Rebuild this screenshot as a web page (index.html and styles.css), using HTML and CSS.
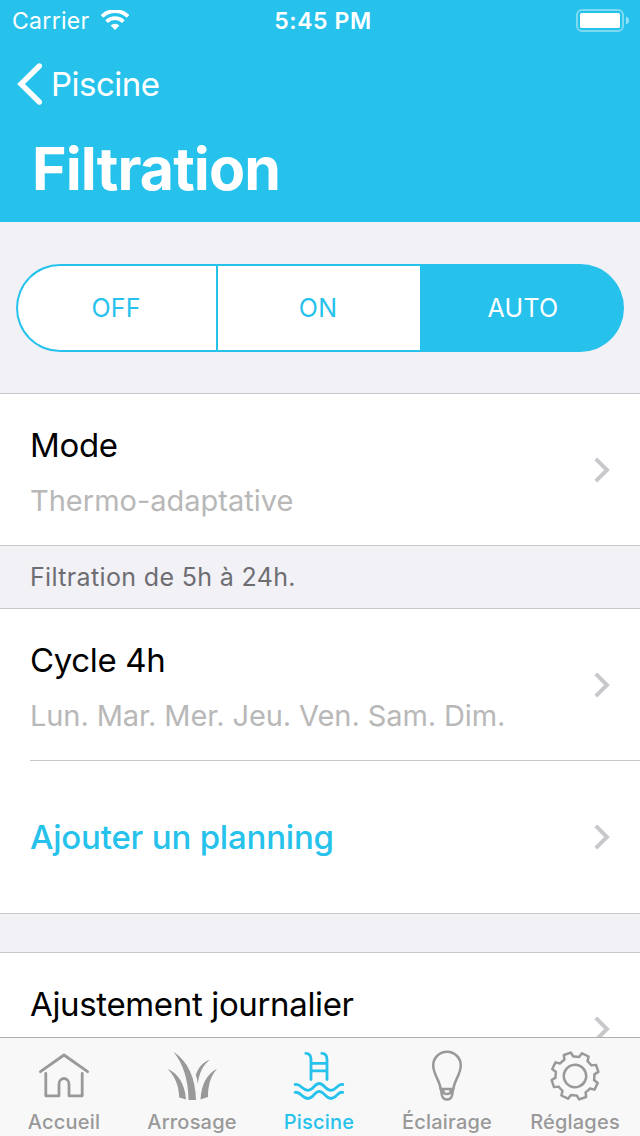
FILE: index.html
```html
<!DOCTYPE html>
<html lang="fr">
<head>
  <meta charset="UTF-8" />
  <meta name="viewport" content="width=device-width, initial-scale=1.0"/>
  <title>Filtration</title>
  <link rel="stylesheet" href="styles.css">
</head>
<body>
  <header>
    <div class="status-bar">
      <div class="carrier">
        <span>Carrier</span>
        <svg width="28" height="20" viewBox="0 0 28 20" fill="none" stroke="#fff">
          <path d="M1 6.4A18.3 18.3 0 0 1 27 6.4" stroke-width="3.8"/>
          <path d="M5.6 11.6A11.8 11.8 0 0 1 22.4 11.6" stroke-width="3.8"/>
          <path d="M14 20L9.6 15.6A6 6 0 0 1 18.4 15.6Z" fill="#fff" stroke="none"/>
        </svg>
      </div>
      <div class="time">5:45 PM</div>
      <svg class="battery" width="53" height="23" viewBox="0 0 53 23">
        <rect x="1" y="1" width="46" height="21" rx="5" fill="none" stroke="#fff" stroke-opacity=".4" stroke-width="2"/>
        <rect x="4" y="4" width="40" height="15" rx="1.5" fill="#fff"/>
        <path d="M50 7.5Q53 8.6 53 11.5T50 15.5Z" fill="#fff" fill-opacity=".5"/>
      </svg>
    </div>
    <a class="back" href="#">
      <svg width="26" height="42" viewBox="0 0 26 42" fill="none" stroke="#fff" stroke-width="5.4" stroke-linecap="round" stroke-linejoin="miter">
        <path d="M22.3 3L4 21L22.3 39"/>
      </svg>
      <span>Piscine</span>
    </a>
    <h1>Filtration</h1>
  </header>

  <main>
    <div class="segmented">
      <button>OFF</button>
      <button>ON</button>
      <button class="active">AUTO</button>
    </div>

    <div class="group">
      <div class="row">
        <div class="text">
          <div class="label">Mode</div>
          <div class="detail">Thermo-adaptative</div>
        </div>
        <svg class="chevron" viewBox="0 0 16 26"><path d="M1.8 1.8L13 13L1.8 24.2"/></svg>
      </div>
    </div>

    <div class="group-footer">Filtration de 5h à 24h.</div>

    <div class="group">
      <div class="row">
        <div class="text">
          <div class="label">Cycle 4h</div>
          <div class="detail days">Lun. Mar. Mer. Jeu. Ven. Sam. Dim.</div>
        </div>
        <svg class="chevron" viewBox="0 0 16 26"><path d="M1.8 1.8L13 13L1.8 24.2"/></svg>
      </div>
      <div class="row line">
        <div class="label add">Ajouter un planning</div>
        <svg class="chevron" viewBox="0 0 16 26"><path d="M1.8 1.8L13 13L1.8 24.2"/></svg>
      </div>
    </div>

    <div class="group last">
      <div class="row">
        <div class="text">
          <div class="label">Ajustement journalier</div>
          <div class="detail">&nbsp;</div>
        </div>
        <svg class="chevron" viewBox="0 0 16 26"><path d="M1.8 1.8L13 13L1.8 24.2"/></svg>
      </div>
    </div>
  </main>

  <nav>
    <a href="#">
      <svg viewBox="0 0 52 52">
        <path d="M2.4 21.7L26 5L49.6 21.7"/>
        <path d="M7.8 23.5V45.8H21V34A5 5.5 0 0 1 31 34V45.8H44.2V23.5"/>
      </svg>
      <span>Accueil</span>
    </a>
    <a href="#">
      <svg class="solid" viewBox="0 0 52 52">
        <path d="M7.3 1.7C22 11 29.5 28 30 50H22.5C22.5 30 17 13 7.3 1.7Z"/>
        <path d="M1.7 18.7C12.5 24 19 34 20 49.5L13.2 47.5C13 35.5 9 27 1.7 18.7Z"/>
        <path d="M43.7 9.7C37 15.5 33.5 22 31.7 34Q31 27.5 29.7 25.3C32 18 36.5 12 43.7 9.7Z"/>
        <path d="M51 18.7C44.5 26.5 42 35 42 47L34.5 49.5C35.5 34 40.5 24.5 51 18.7Z"/>
      </svg>
      <span>Arrosage</span>
    </a>
    <a class="active" href="#">
      <svg viewBox="0 0 52 52">
        <path d="M12.8 3.3C16.8 3.3 18 5.5 18 9.5V29.5M28.8 3.3C32.8 3.3 34 5.5 34 9.5V29.5M18 13.3H34M18 20.8H34"/>
        <path d="M2.2 34.5C8 33.5 9 40.3 15 40.3S21 33.5 26.2 33.5S32 40.3 38 40.3S44 33.5 49.8 34.5"/>
        <path d="M2.2 42.3C8 41.3 9 48.5 15 48.5S21 41.3 26.2 41.3S32 48.5 38 48.5S44 41.3 49.8 42.3"/>
      </svg>
      <span>Piscine</span>
    </a>
    <a href="#">
      <svg viewBox="0 0 52 52" class="thin">
        <path d="M19.6 39C19 31 12.2 24 12.2 15.5A13.8 13.8 0 0 1 39.8 15.5C39.8 24 33 31 32.4 39Z"/>
        <path d="M19.8 39L21 45.5Q22 49.5 26 49.5Q30 49.5 31 45.5L32.2 39M22.5 41V43Q26 45 29.5 43V41"/>
      </svg>
      <span>Éclairage</span>
    </a>
    <a href="#">
      <svg viewBox="0 0 52 52" class="thin">
        <g transform="translate(26 26) rotate(26)">
          <circle r="11.2"/>
          <path d="M-3.7 -23.5H3.7L4.7 -18.9Q8 -17.8 10 -16.7L14 -19.2L19.2 -14L16.7 -10Q18.2 -7.5 18.9 -4.7L23.5 -3.7V3.7L18.9 4.7Q18.2 7.5 16.7 10L19.2 14L14 19.2L10 16.7Q8 17.8 4.7 18.9L3.7 23.5H-3.7L-4.7 18.9Q-8 17.8 -10 16.7L-14 19.2L-19.2 14L-16.7 10Q-18.2 7.5 -18.9 4.7L-23.5 3.7V-3.7L-18.9 -4.7Q-18.2 -7.5 -16.7 -10L-19.2 -14L-14 -19.2L-10 -16.7Q-8 -17.8 -4.7 -18.9Z"/>
        </g>
      </svg>
      <span>Réglages</span>
    </a>
  </nav>
</body>
</html>
```
FILE: styles.css
```css
* {
  box-sizing: border-box;
}
body {
  margin: 0;
  width: 640px;
  height: 1136px;
  overflow: hidden;
  display: flex;
  flex-direction: column;
  background: #f2f1f6;
  color: #000;
  font-family: Inter, "Liberation Sans", sans-serif;
}
a {
  color: inherit;
  text-decoration: none;
}
svg {
  display: block;
  flex: none;
}

/* header */
header {
  height: 222px;
  flex: none;
  background: #26c2ec;
  color: #fff;
}
.status-bar {
  height: 41px;
  padding: 0 11px 0 12px;
  display: grid;
  grid-template-columns: 1fr auto 1fr;
  align-items: center;
  font-size: 23px;
}
.carrier {
  display: flex;
  align-items: center;
  gap: 11px;
  letter-spacing: 0.3px;
}
.carrier svg {
  margin-top: -1px;
}
.time {
  padding-left: 5px;
  font-weight: 600;
  letter-spacing: 0.6px;
}
.battery {
  justify-self: end;
}
.back {
  height: 85px;
  padding-left: 17px;
  display: flex;
  align-items: center;
  gap: 8px;
  font-size: 33px;
  letter-spacing: -0.5px;
}
h1 {
  margin: 7px 0 0 32px;
  font-size: 59px;
  line-height: 72px;
  font-weight: 700;
  letter-spacing: -0.9px;
}

/* content */
main {
  flex: 1;
  min-height: 0;
  overflow: hidden;
}
.segmented {
  height: 88px;
  margin: 42px 16px 41px;
  padding: 2px;
  display: grid;
  grid-template-columns: 198px 202px 202px;
  column-gap: 2px;
  border-radius: 44px;
  overflow: hidden;
  background: #26c2ec;
}
.segmented button {
  border: 0;
  padding: 0 2px 0 0;
  background: #fff;
  color: #26c2ec;
  font: 400 25px Inter, sans-serif;
  letter-spacing: 0.2px;
}
.segmented button:first-child {
  border-radius: 42px 0 0 42px;
}
.segmented .active {
  padding-right: 0;
  background: none;
  color: #fff;
  letter-spacing: 0.3px;
}
.group {
  background: #fff;
  border-top: 1px solid #c8c7cc;
  border-bottom: 1px solid #c8c7cc;
}
.row {
  height: 151px;
  margin-left: 30px;
  padding-right: 30px;
  display: flex;
  align-items: center;
  justify-content: space-between;
}
.row.line {
  height: 153px;
  border-top: 1px solid #c8c7cc;
}
.text {
  padding-top: 4px;
}
.label {
  font-size: 33px;
  line-height: 44px;
  letter-spacing: -0.35px;
}
.detail {
  margin-top: 14px;
  font-size: 29px;
  line-height: 40px;
  color: #b8b8b8;
}
.detail.days {
  letter-spacing: -0.1px;
}
.label.add {
  color: #26c2ec;
  font-weight: 500;
  letter-spacing: -0.2px;
}
.chevron {
  width: 16px;
  height: 26px;
  fill: none;
  stroke: #c7c7cc;
  stroke-width: 4;
}
.group-footer {
  height: 62px;
  padding-left: 30px;
  font-size: 25px;
  line-height: 62px;
  letter-spacing: 0.35px;
  color: #6d6d72;
}
.last {
  margin-top: 38px;
}

/* tab bar */
nav {
  height: 99px;
  flex: none;
  display: grid;
  grid-template-columns: repeat(5, 1fr);
  border-top: 1px solid #adadad;
  background: #f8f8f8;
  color: #999;
}
nav a {
  display: flex;
  flex-direction: column;
  align-items: center;
  padding-top: 12px;
  font-size: 20px;
  line-height: 24px;
  font-weight: 500;
  letter-spacing: 0.2px;
}
nav a:nth-child(n+3) {
  padding-right: 2px;
}
nav a.active {
  color: #26c2ec;
}
nav svg {
  width: 52px;
  height: 52px;
  margin-bottom: 8px;
  fill: none;
  stroke: currentColor;
  stroke-width: 2.8;
  stroke-linecap: round;
  stroke-linejoin: round;
}
nav .thin {
  stroke-width: 2.5;
}
nav .solid {
  fill: currentColor;
  stroke: none;
}
```
